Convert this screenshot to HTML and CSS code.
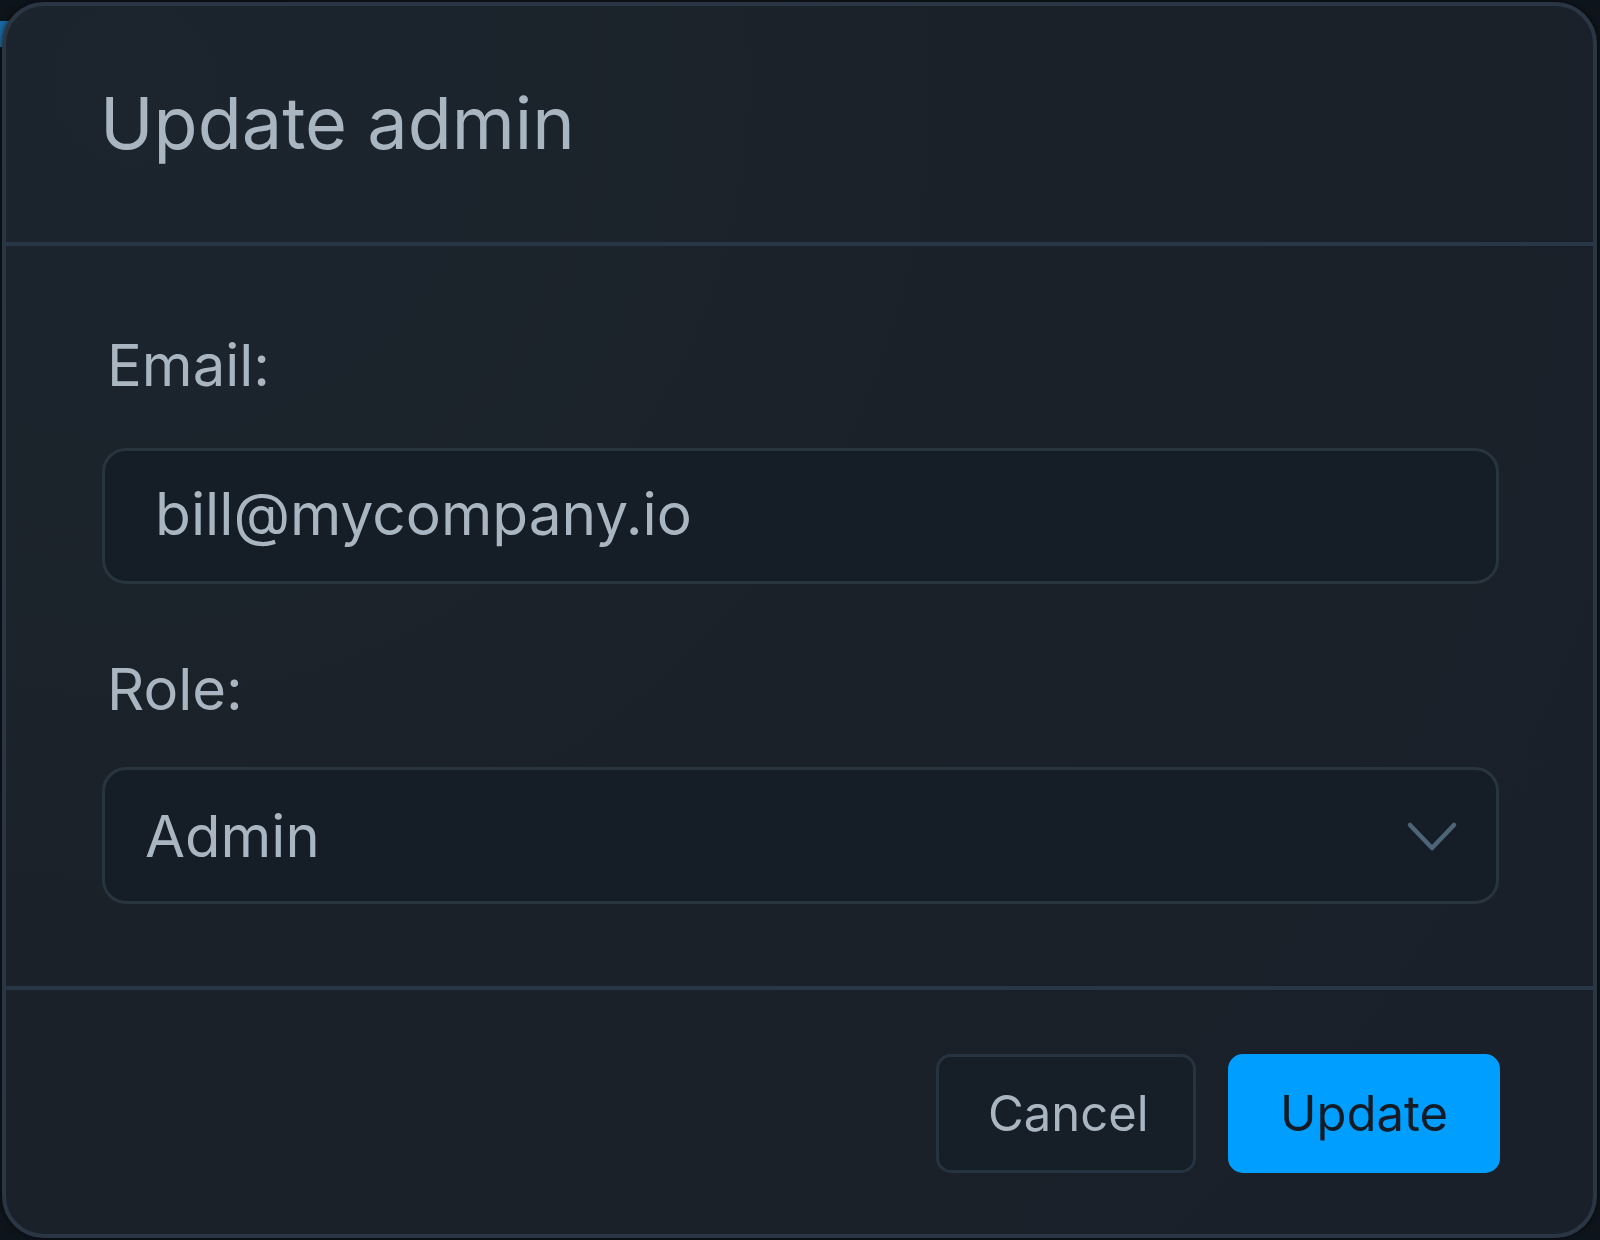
FILE: index.html
```html
<!DOCTYPE HTML>
<html>
<head>
    <meta name="viewport" content="width=device-width, height=device-height, initial-scale=1.0">
    <link rel="stylesheet" href="styles.css">
</head>
<body>
    <div class="backdrop-tab"></div>
    <div class="modal">
        <div class="modal-header">
            <h1 class="modal-title">Update admin</h1>
        </div>
        <div class="modal-body">
            <label class="field-label label-email" for="email">Email:</label>
            <input class="field-input" id="email" type="text" value="bill@mycompany.io">
            <label class="field-label label-role" for="role">Role:</label>
            <div class="select-wrap">
                <select class="field-select" id="role">
                    <option>Admin</option>
                    <option>Member</option>
                </select>
                <svg class="chevron" width="52" height="32" viewBox="0 0 52 32">
                    <path d="M4 4 L26 27 L48 4" fill="none" stroke="#4d6579" stroke-width="4.5" stroke-linecap="round" stroke-linejoin="round"/>
                </svg>
            </div>
        </div>
        <div class="modal-footer">
            <button class="btn btn-cancel">Cancel</button>
            <button class="btn btn-primary">Update</button>
        </div>
    </div>
</body>
</html>
```

FILE: styles.css
```css
* {
    padding: 0;
    margin: 0;
    box-sizing: border-box;
}
body {
    background-color: #0e141b;
    font-family: Inter, "Noto Sans", sans-serif;
    color: #a9b6c1;
    width: 1600px;
    height: 1240px;
    overflow: hidden;
    position: relative;
}
.backdrop-tab {
    position: absolute;
    left: 0;
    top: 21px;
    width: 60px;
    height: 26px;
    background-color: #1a6aa3;
}
.modal {
    position: relative;
    margin: 2px 0 0 2px;
    width: 1595px;
    height: 1236px;
    background: radial-gradient(circle at 8% 6%, #1c252e 0%, #1a2129 45%, #1a2029 100%);
    border: 4px solid #2a3643;
    border-radius: 42px;
    box-shadow: 0 0 6px rgba(0, 0, 0, 0.6);
    display: flex;
    flex-direction: column;
}
.modal-header {
    height: 240px;
    padding: 74px 0 0 94px;
    border-bottom: 4px solid #283646;
}
.modal-title {
    font-size: 72px;
    font-weight: 400;
    line-height: 86px;
    color: #a9b6c1;
}
.modal-body {
    height: 744px;
    padding: 84px 94px 0 96px;
    border-bottom: 4px solid #283646;
    display: flex;
    flex-direction: column;
}
.field-label {
    display: block;
    font-size: 58px;
    line-height: 70px;
    margin-left: 5px;
    color: #a9b6c1;
}
.label-email {
    margin-bottom: 48px;
}
.label-role {
    margin-top: 70px;
    margin-bottom: 43px;
}
.field-input,
.field-select {
    width: 100%;
    height: 136px;
    font-family: Inter, "Noto Sans", sans-serif;
    font-size: 58px;
    color: #a9b6c1;
    background-color: #151d26;
    border: 3px solid #28353f;
    border-radius: 24px;
    outline: none;
}
.field-input {
    font-size: 58.6px;
    padding: 0 0 6px 50px;
}
.select-wrap {
    position: relative;
}
.field-select {
    height: 137px;
    padding: 0 0 0 40px;
    appearance: none;
    -webkit-appearance: none;
}
.chevron {
    position: absolute;
    right: 41px;
    top: 54px;
}
.modal-footer {
    flex: 1;
    display: flex;
    justify-content: flex-end;
    align-items: flex-start;
    gap: 32px;
    padding: 64px 93px 0 0;
}
.btn {
    height: 119px;
    padding: 0 49px;
    font-family: Inter, "Noto Sans", sans-serif;
    font-size: 49px;
    border-radius: 15px;
    border: 3px solid #263340;
    cursor: pointer;
}
.btn-cancel {
    width: 260px;
    background-color: #161e27;
    color: #a9b6c1;
}
.btn-primary {
    width: 272px;
    background-color: #009fff;
    border-color: #009fff;
    color: #131c26;
}
```
